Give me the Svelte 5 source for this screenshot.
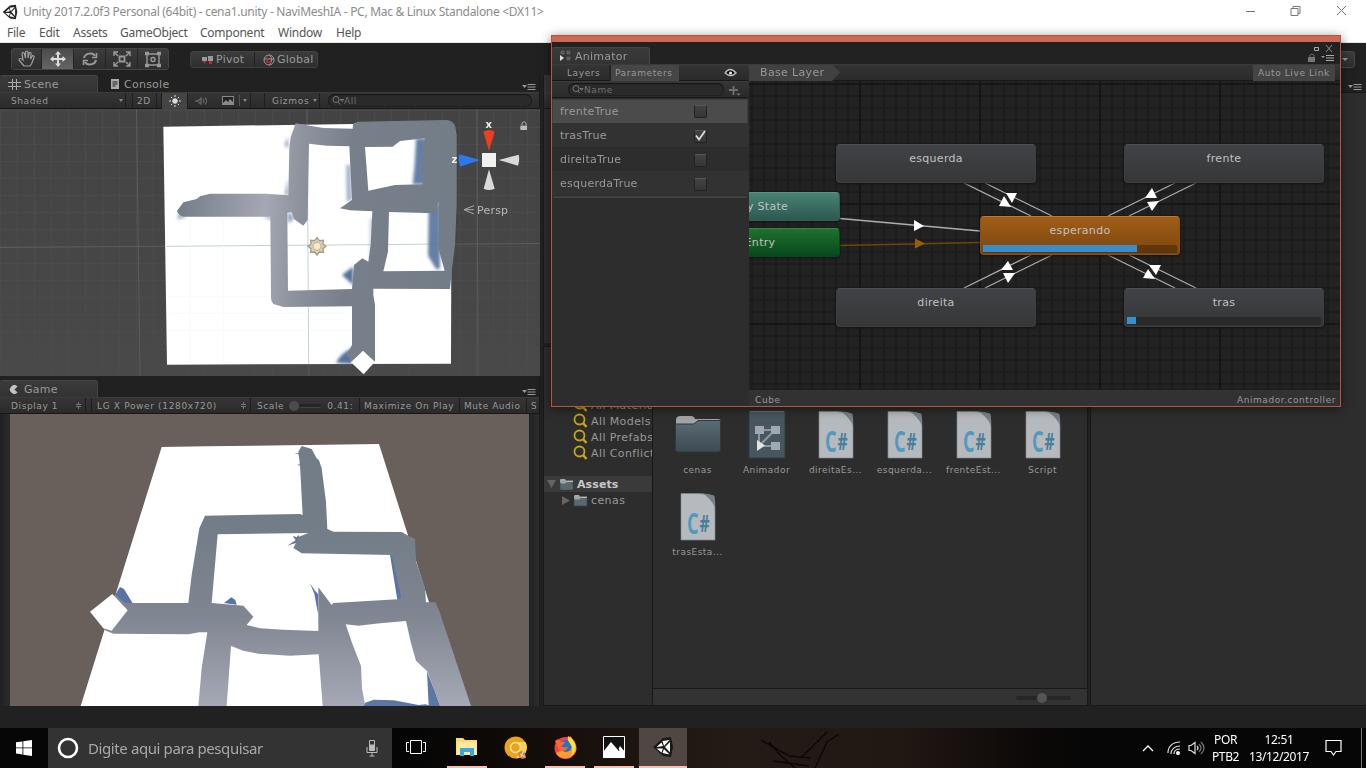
<script>
  const menus = [['File', 32], ['Edit', 34], ['Assets', 47], ['GameObject', 80], ['Component', 78], ['Window', 58], ['Help', 30]];
  const params = [['frenteTrue', false], ['trasTrue', true], ['direitaTrue', false], ['esquerdaTrue', false]];
  const nodes = [
    { name: 'Any State', kind: 'any', x: 680, y: 192 },
    { name: 'Entry', kind: 'entry', x: 680, y: 228 },
    { name: 'esquerda', kind: 'state', x: 836, y: 144 },
    { name: 'frente', kind: 'state', x: 1124, y: 144 },
    { name: 'direita', kind: 'state', x: 836, y: 288 },
    { name: 'tras', kind: 'state', x: 1124, y: 288, progress: 4.6 },
    { name: 'esperando', kind: 'def', x: 980, y: 216, progress: 79.3 }
  ];
  const edges = [
    [964, 183, 1031, 216], [985, 183, 1052, 216],
    [1175, 183, 1108, 216], [1196, 183, 1129, 216],
    [1031, 255, 964, 288], [1052, 255, 985, 288],
    [1108, 255, 1175, 288], [1129, 255, 1196, 288]
  ];
  const heads = [
    '1004,196 1011,207 999,206', '1006,193 1017,193 1012,203',
    '1152,188 1157,198 1145,198', '1147,202 1159,201 1152,211',
    '1008,261 1013,270 1001,270', '1003,273 1015,273 1008,283',
    '1148,269 1155,279 1143,278', '1149,265 1161,265 1156,275'
  ];
  const files = [['cenas', 'folder'], ['Animador', 'anim'], ['direitaEs...', 'cs'], ['esquerda...', 'cs'], ['frenteEst...', 'cs'], ['Script', 'cs'], ['trasEsta...', 'cs']];
  const range = (a, b, s) => Array.from({ length: Math.ceil((b - a) / s) }, (_, i) => a + i * s);
</script>

{#snippet paneMenu()}
  <svg class="pm" width="14" height="8"><path d="M0 2h5L2.500 5z" fill="#999" /><path d="M5.500 1.500h8M5.500 4h8M5.500 6.500h8" stroke="#999" /></svg>
{/snippet}

{#snippet smallFolder()}
  <svg width="15" height="13"><path d="M1 3V1.500L2 1h4l1 1.500h7V12H1z" fill="#9ea6a8" /><path d="M1 5h5l2-1.500h6V12H1z" fill="#5a686d" stroke="#37444a" stroke-width=".7" /><path d="M1.500 5H6l2-1.500h6" stroke="#b2babb" fill="none" /></svg>
{/snippet}

{#snippet lens()}
  <svg width="15" height="16"><circle cx="6.500" cy="6.500" r="5" fill="none" stroke="#c9a414" stroke-width="1.800" /><path d="M10 10l3.500 4" stroke="#c9a414" stroke-width="2.600" /></svg>
{/snippet}

{#snippet unityLogo(size, ink, face)}
  <svg width={size} height={size} viewBox="0 0 22 22">
    <path d="M1 11L11 2l8-1 2 10-2 10-8-1z" fill={ink} />
    <path d="M12 10L10.500 5l7-1zM4.500 11l5-4.500L11 10zM4.500 12.500H11l-1.500 4zM13 11l5-5v10.500zM12 13l5.500 5.500-7-1.500z" fill={face} />
  </svg>
{/snippet}

<div class="screen">
  <header class="title">
    {@render unityLogo(16, '#222', '#fff')}
    <span>Unity 2017.2.0f3 Personal (64bit) - cena1.unity - NaviMeshIA - PC, Mac &amp; Linux Standalone &lt;DX11&gt;</span>
    <svg width="130" height="22" fill="none" stroke="#777"><path d="M10 10.500h9M55 7.500h7v7h-7zM57 7V5.500h7v7h-2M101 5l9 9M110 5l-9 9" /></svg>
  </header>
  <nav class="menu">
    {#each menus as [m, w]}<span style:width="{w}px">{m}</span>{/each}
  </nav>

  <div class="toolbar">
    <div class="tools">
      <span><svg width="20" height="20" fill="none" stroke="#a0a0a0" stroke-width="1.200"><path d="M7 17l-5-6c0-2 2-2 4 0L5 5c0-2 2-2 2.500 0L8.500 9V3.500c0-2 2.500-2 2.500 0V9l1-4.500c.5-2 2.500-1 2 1L13.500 10l1.500-2.500c1-1.500 2.500-.5 2 1L14.500 15 13 17z" /></svg></span>
      <span class="on"><svg width="16" height="16" fill="#ddd"><path d="M7 3.500H5L8 0l3 3.500H9V7h3.500V5L16 8l-3.500 3V9H9v3.500h2L8 16l-3-3.500h2V9H3.500v2L0 8l3.500-3v2H7z" /></svg></span>
      <span><svg width="16" height="14" fill="none" stroke="#999" stroke-width="2"><path d="M2 6c1-5 9-6 11-2M14 8c-1 5-9 6-11 2" /><path d="M10 5.500h4.500V1M6 8.500H1.500V13" stroke-width="1.600" /></svg></span>
      <span><svg width="18" height="16" fill="none" stroke="#999" stroke-width="1.400"><path d="M6.500 5.500h5v5h-5z" stroke-width="1.800" /><path d="M1 5V1h4M1 1l4 4M17 5V1h-4M17 1l-4 4M1 11v4h4M1 15l4-4M17 11v4h-4M17 15l-4-4" /></svg></span>
      <span><svg width="18" height="17" fill="none" stroke="#999" stroke-width="1.400"><path d="M3 3h12v11H3z" /><circle cx="9" cy="8.500" r="2" /><path d="M1 2.500h4M13 2.500h4M1 14.500h4M13 14.500h4" stroke-width="3.500" /></svg></span>
    </div>
    <div class="pivot t11">
      <span><svg width="12" height="10"><path d="M0 2h5v4H0zM6 1h5v5H6z" fill="#999" /><path d="M1 6h3l-1.500 3zM7 6h3v3H7z" fill="#d02038" /></svg>Pivot</span>
      <span><svg width="12" height="12" fill="none" stroke="#999"><circle cx="6" cy="6" r="5" /><path d="M1 5h10M6 1c4 3 3 7 0 10" /><path d="M4 3v5h4" stroke="#d02038" stroke-width="1.500" /></svg>Global</span>
    </div>
    <div class="layout"><svg width="6" height="4"><path d="M0 0h6L3 3z" fill="#999" /></svg></div>
  </div>

  <main>
    <section class="left">
      <div class="tabs">
        <div class="tab t11 first"><svg width="13" height="13" stroke="#aaa"><path d="M4.500 1v11M8.500 1v11M0 4.500h13M0 8.500h13" /></svg>Scene</div>
        <div class="tab t11 idle"><svg width="9" height="11"><path d="M0 0h8v10H0z" fill="#aaa" /><path d="M1.500 3h5M1.500 5h5M1.500 7h3" stroke="#222" /></svg>Console</div>
        {@render paneMenu()}
      </div>
      <div class="bar t9">
        <span class="c shaded">Shaded<i class="dn"></i></span><span class="c gap1"></span><span class="c d2">2D</span><span class="c gap2"></span>
        <span class="c ic on"><svg width="12" height="12" stroke="#ddd"><circle cx="6" cy="6" r="2.300" fill="#ddd" /><path d="M6 0v2M6 10v2M0 6h2M10 6h2M2 2l1.200 1.200M8.800 8.800L10 10M10 2L8.800 3.200M3.200 8.800L2 10" stroke-width="1" /></svg></span>
        <span class="ic"><svg width="13" height="12" fill="none" stroke="#656565"><path d="M0 6h3l3-3v6L3 7M8 4c1 1 1 3 0 4M10 2.500c2 2 2 5 0 7" stroke-width="1.300" /></svg></span>
        <span class="c pic"><svg width="12" height="9"><path d="M0 0h12v9H0z" fill="#888" /><path d="M1 1h10v5L8 3 6 6 4 4 1 7z" fill="#222" /></svg><b></b><i class="dn"></i></span>
        <span class="c gap3"></span><span class="c giz">Gizmos<i class="dn"></i></span>
        <span class="search"><svg width="13" height="9" fill="none" stroke="#777"><circle cx="4" cy="3.500" r="3" /><path d="M6 6l2.500 2.500M8 3.500h4l-2 2z" /></svg>All</span>
      </div>
      <svg class="scene" width="540" height="267" viewBox="0 109 540 267">
        <defs>
          <linearGradient id="slate" gradientUnits="userSpaceOnUse" x1="80" y1="0" x2="920" y2="60"><stop offset="0" stop-color="#707984" /><stop offset=".34" stop-color="#a4a8b3" /><stop offset=".45" stop-color="#8f949f" /><stop offset=".64" stop-color="#777f8b" /><stop offset="1" stop-color="#737d87" /></linearGradient>
          <filter id="soft" x="-40%" y="-40%" width="180%" height="180%"><feGaussianBlur stdDeviation="5" /></filter>
          <linearGradient id="sbg" x2="0" y2="1"><stop stop-color="#434343" /><stop offset="1" stop-color="#494949" /></linearGradient>
        </defs>
        <rect y="109" width="540" height="267" fill="url(#sbg)" />
        {#each range(0, 540, 17) as x}<path d="M{x + .5} 109V376" stroke="#4d4d4d" stroke-opacity=".7" />{/each}
        {#each range(110, 376, 17) as y}<path d="M0 {y + .5}H540" stroke="#4d4d4d" stroke-opacity=".7" />{/each}
        <path d="M136.500 109L140 376M307 109L309 376M477 109L478 376M0 247.500L540 243.500" stroke="#5c5c5c" fill="none" />
        <g transform="translate(150 105) scale(.33333)">
          <path d="M40 65L610 57 905 60 903 776 51 779z" fill="#fff" />
          <path d="M50 424L900 417M472 120L476 777" stroke="#c0d1d9" stroke-width="3" />
          <path d="M60 575H360M60 625H600M60 675H600M120 345V775M220 345V775" stroke="#f1f8f9" stroke-width="2" />
          <g fill="#54719c" filter="url(#soft)">
            <path d="M798 100h32v138h-42l6-60z" opacity=".9" /><path d="M836 322l34-35v205h-12l-24-40z" opacity=".9" /><path d="M414 95v35l-10-10zM414 220v50h-10z" opacity=".7" /><path d="M588 180l14 0 4 105-16 5z" opacity=".5" /><path d="M658 340h15v105l-15 20z" opacity=".25" />
            <path d="M576 510l33-25v55z" /><path d="M558 774q15-30 49-45v48z" /><path d="M335 335h30v10zM412 325h14l6 18-18 12zM85 325l25 12-28 5z" opacity=".6" />
          </g>
          <path fill="url(#slate)" fill-rule="evenodd" d="M81 318L100 292 140 282 150 274 180 266 345 266 415 271 418 130 422 97 437 55 480 62 520 69 608 71 610 55 625 50 890 45 Q912 48 916 65L920 90 920 300 915 420 905 500 900 552 670 551 670 570 675 600 675 770 640 740 605 770 590 750 606 720 606 604 400 606 370 597 Q362 590 363 575L361 335 100 335 Q84 330 81 318ZM477 116L530 122 598 124 606 285 570 310 600 316 667 319 662 420 655 470 637 460 612 480 606 552 414 557 412 323 425 322 432 342 460 362 473 345ZM645 126L728 125 750 108 824 100 815 170 818 238 735 240 655 257ZM717 321L853 325 866 290 865 430 884 497 700 499 714 440Z" />
          <path d="M639 737L674 771 641 808 603 772z" fill="#fff" />
          <g stroke="#a39c8b" stroke-width="4" fill="#d8d0bb"><path d="M501 398l7 9 12-1-1 11 9 7-9 7 1 11-12-1-7 9-7-9-12 1 1-11-9-7 9-7-1-11 12 1z" /><circle cx="501" cy="424" r="12" fill="#fbe9c4" stroke-width="2" /></g>
          <path d="M1000 80q17-10 34 0l-17 58z" fill="#ed3e20" /><path d="M928 148q-5 17 2 37l60-20z" fill="#2d78ea" /><path d="M1106 149q4 16-2 33l-58-17z" fill="#d9d9d9" /><path d="M1001 251q16 8 33 0l-17-58z" fill="#d9d9d9" />
          <path d="M996 144h42v42h-42z" fill="#f0f0f0" />
          <path d="M972 302l-30 12 30 13M942 314h30" fill="none" stroke="#aaa" stroke-width="3" />
          <path d="M1111 62h20v13h-20z" fill="#bbb" /><path d="M1116 62v-8q7-8 12 0v8" stroke="#aaa" stroke-width="3" fill="none" />
        </g>
        <text x="485.500" y="127.500" class="ax">x</text><text x="451.500" y="163" class="ax">z</text><text x="477" y="214" class="persp">Persp</text>
      </svg>

      <div class="tabs gametabs">
        <div class="tab t11 first"><svg width="13" height="11"><path d="M9 2.500A4 4 0 1 0 9 8.500L6 5.500z" fill="#c4c4c4" stroke="#c4c4c4" /></svg>Game</div>
        {@render paneMenu()}
      </div>
      <div class="bar t9">
        <span class="c disp">Display 1<em></em></span><span class="c gap1"></span><span class="c res">LG X Power (1280x720)<em></em></span>
        <span class="c scale">Scale<u></u><s></s>0.41:</span><span class="c max">Maximize On Play</span><span class="c mute">Mute Audio</span><span class="st">S</span>
      </div>
      <div class="gamewrap">
        <svg width="519" height="292" viewBox="10 414 519 292">
          <defs><linearGradient id="gs" gradientUnits="userSpaceOnUse" x1="0" y1="213" x2="0" y2="993"><stop offset=".3" stop-color="#727d88" /><stop offset=".65" stop-color="#7f8591" /><stop offset="1" stop-color="#a5a9b5" /></linearGradient></defs>
          <rect x="10" y="414" width="519" height="292" fill="#69605b" />
          <g transform="translate(0 375) scale(.33333)">
            <path d="M485 216L620 214 1137 207 1223 478 1287 682 1390 993H242z" fill="#fff" />
            <g fill="#5874a2"><path d="M345 660l15-24 12 6 27 44h-25zM672 684l22-17 12 8 4 14zM862 512l25-16-9-14 12 5 6-7 3 11 28-11-12 14-30 11z" /><path d="M883 235l18-2v8zM891 270l10-5v8z" opacity=".6" /><path d="M1170 539h14l22 135h-14zM930 625l15 22 9 10 1 64-12-65z" /></g>
            <path fill="url(#gs)" fill-rule="evenodd" d="M905 213L935 222 950 250 957 256 965 280 978 380 982 462 1000 470 1205 471 1225 482 1245 492 1248 560 1262 600 1275 640 1278 682 1307 682 1320 715 1413 993 1320 993 1305 950 1283 890 1248 857 1233 805 1218 738 1140 745 1075 752 1037 748 1057 806 1083 873 1086 940 1096 993 968 993 956 838 870 842 775 836 730 827 693 813 680 993 595 993 605 880 622 772 598 772 565 778 340 776 313 765 345 660 375 684 565 684 575 600 598 460 615 422 900 417 908 420 900 270 895 230ZM653 478L925 474 897 485 880 519 905 535 1175 540 1205 672 1000 684 995 690 955 637 955 768 850 764 780 760 740 750 760 725 730 692 635 684Z" />
            <path d="M1281 888l24 62 15 43h-34zM1096 983l25-9 60 2 75 14 20-2 25 7h-210z" fill="#5d77a3" />
            <path d="M337 657L383 706 335 767 310 760 270 710z" fill="#fff" />
          </g>
        </svg>
      </div>
    </section>

    <section class="mid">
      <div class="hier"><div class="tabs"></div><div class="bar"></div></div>
      <div class="project">
        <div class="tree t11">
          <div class="row q">{@render lens()}All Materials</div>
          <div class="row q">{@render lens()}All Models</div>
          <div class="row q">{@render lens()}All Prefabs</div>
          <div class="row q">{@render lens()}All Conflicts</div>
          <div class="row"></div>
          <div class="row assets"><svg width="9" height="8"><path d="M0 0h9L4.500 8z" fill="#646464" /></svg>{@render smallFolder()}<b>Assets</b></div>
          <div class="row sub"><svg width="8" height="9"><path d="M0 0v9l8-4.500z" fill="#646464" /></svg>{@render smallFolder()}cenas</div>
        </div>
        <div class="list">
          <div class="files t9">
            {#each files as [name, kind]}
              <figure>
                <svg width="52" height="54" viewBox="0 -1 52 54">
                  {#if kind === 'folder'}
                    <defs><linearGradient id="fo" x2="0" y2="1"><stop stop-color="#5b6c75" /><stop offset="1" stop-color="#3c4a51" /></linearGradient></defs>
                    <path d="M4 14V7q1-3 4-3h11q3 0 4 3h23q3 0 3 3v6H4z" fill="#a2a5a6" /><path d="M3.500 12H22l4-3.500h22.500V38q0 2-3 2H6q-2.500 0-2.500-2z" fill="url(#fo)" stroke="#2f3a3f" />
                  {:else if kind === 'anim'}
                    <path d="M8 -1h36v47H8z" fill="#47565f" stroke="#303b41" /><path d="M9 -.5h34" stroke="#60727c" /><path d="M18 18h15M18 18v14M34 18L19 33M34 34H20" stroke="#8d989e" stroke-width="2" />
                    <path d="M14 14h9v8h-9zM30 14h9v8h-9zM30 30h9v8h-9z" fill="#a0a9af" /><path d="M16 28l8 5.500L16 39z" fill="#e4e4e4" />
                  {:else}
                    <path d="M9 -.5H26Q36 0 42 2q1 6 1 14V46H9z" fill="#b6babf" stroke="#80868b" stroke-width=".7" /><path d="M31 -.3Q39 0 42 2q1 8 1 11Q38 4 31 -.3z" fill="#75828a" />
                    <text x="15" y="40" class="csharp" textLength="12" lengthAdjust="spacingAndGlyphs">C</text>
                    <text x="27.500" y="37.500" class="csharp hash" textLength="10.500" lengthAdjust="spacingAndGlyphs">#</text>
                  {/if}
                </svg>
                <figcaption>{name}</figcaption>
              </figure>
            {/each}
          </div>
          <div class="foot"><u></u></div>
        </div>
      </div>
    </section>

    <section class="insp"><div class="tabs">{@render paneMenu()}</div><div class="body"></div></section>
  </main>
  <div class="status"></div>

  <footer>
    <div class="start"><svg width="16" height="16" fill="#fff"><path d="M0 2.300L6.500 1.400V7.500H0zM7.300 1.300L16 0v7.500H7.300zM0 8.300h6.500v6.200L0 13.600zM7.300 8.300H16V16l-8.700-1.200z" /></svg></div>
    <div class="find"><svg width="22" height="22"><circle cx="11" cy="11" r="9" fill="none" stroke="#fff" stroke-width="2.600" /></svg><span>Digite aqui para pesquisar</span><svg width="12" height="17" fill="none" stroke="#bbb"><path d="M3.500.5h5v10h-5z" /><path d="M4 5h4v5H4z" fill="#bbb" /><path d="M1 7v5.500h10V7M6 12.500V16M3.500 16h5" /></svg></div>
    <div class="app"><svg width="20" height="14" fill="none" stroke="#fff"><path d="M4.500.5h11v13h-11zM3 2.500H.5v9H3M17 2.500h2.500v9H17" /></svg></div>
    <div class="app run a2"><svg width="22" height="20"><path d="M0 1h7l2 2h12v15H0z" fill="#fcd976" /><path d="M1 5h20v13H1z" fill="#ffe79b" /><path d="M4 11h14v8h-4v-4H8v4H4z" fill="#36a8e0" /></svg></div>
    <div class="app a3"><svg width="23" height="23"><circle cx="11.500" cy="11.500" r="11" fill="#eda31a" /><path d="M11.500 6h10A11 11 0 0 1 12 22.500l5-8z" fill="#fbd04f" /><circle cx="11.500" cy="11.500" r="5" fill="#e9a51d" stroke="#fbe6ae" stroke-width="1.500" /><path d="M14 17l3-2 4 2 1 5-4 1-3-2z" fill="#c78644" /><path d="M16 18l5 3M19 16l-2 5" stroke="#fae3c0" /></svg></div>
    <div class="app run a4"><svg width="23" height="23"><circle cx="11.500" cy="12" r="11" fill="#f43f4c" /><path d="M2 17C5 24 18 25 22 15c1-6-1-10-6-15-2 4-2 6 0 10z" fill="#ff9a2c" /><circle cx="12" cy="10" r="6" fill="#2574c9" /><path d="M14 0c8 5 11 15 2 20 3-3 3-7 1-11-2-3-4-5-3-9z" fill="#ffe23b" /><path d="M1 5l3-2 3 3h4c-1 3-3 3-4 4 2 2 5 1 7 1-2 5-8 5-10 1z" fill="#fb6930" /></svg></div>
    <div class="app run a5"><svg width="22" height="22"><path d="M.5.5h21v21H.5z" fill="#111" stroke="#fff" /><path d="M0 16L8 6l7 8 2-4 5 6v6H0z" fill="#fff" /><path d="M14 10l2 5" stroke="#111" /></svg></div>
    <div class="app run active">{@render unityLogo(22, '#181818', '#fff')}</div>
    <svg class="branches" width="150" height="40" fill="none" stroke="#0d0807" stroke-width="1.500"><path d="M0 12l28 16 22 2M12 33l36 5M8 14l12 14 14 12M40 30L66 4M54 40l12-26 12-8" /></svg>
    <div class="tray">
      <svg class="chev" width="12" height="8" fill="none" stroke="#fff" stroke-width="1.300"><path d="M1 7l5-5 5 5" /></svg>
      <svg width="14" height="14" fill="none" stroke="#ddd" stroke-width="1.200"><path d="M1 12C1 5 6 1 13 1M4 13c0-5 4-8 9-8M7 13c0-3 2-5 6-5" /><circle cx="11" cy="12" r="1.500" fill="#fff" /></svg>
      <svg width="17" height="14" fill="none" stroke="#ddd" stroke-width="1.200"><path d="M1 4.500h2l4-3v11l-4-3H1zM9 5q2 2 0 4" /><path d="M11 3q4 4 0 8M13 1q6 6 0 12" stroke="#777" /></svg>
      <div class="por">POR<br />PTB2</div><div class="clock">12:51<br />13/12/2017</div>
      <svg class="note" width="17" height="18" fill="none" stroke="#fff" stroke-width="1.200"><path d="M1 1.500h15v11h-5L8.500 16 6 12.500H1z" /></svg><i></i>
    </div>
  </footer>

  <div class="animator">
    <div class="strip"></div>
    <div class="wtabs">
      <div class="tab t11"><svg width="12" height="12"><path d="M1 1h3v3H1zM7 1h3v3H7zM7 7h3v3H7z" fill="#555" stroke="#777" stroke-width=".5" /><path d="M0 5l4 3-4 3z" fill="#ddd" /></svg>Animator</div>
      <svg class="lk" width="8" height="10"><path d="M0 4h7v5H0z" fill="#777" /><path d="M2 4V2q2-2 4 0v2" fill="none" stroke="#666" /></svg>
      <svg class="wc" width="28" height="22" fill="none" stroke="#888"><path d="M2.500 5.500h4v3h-4z" stroke="#aaa" /><path d="M14 3l6 7M20 3l-6 7" /><path d="M9 14h4l-2 2z" fill="#999" stroke="none" /><path d="M14 13.500h8M14 16h8M14 18.500h8" stroke="#aaa" /></svg>
    </div>
    <div class="wbody">
      <div class="side">
        <div class="bar t9"><span class="lay">Layers</span><span class="par">Parameters</span><svg width="13" height="10"><path d="M1 5q5-7 11 0-5 5-11 0" fill="#111" stroke="#bbb" stroke-width="1.500" /><circle cx="6.500" cy="5" r="1.500" fill="#eee" /></svg></div>
        <div class="bar t9"><span class="search"><svg width="12" height="9" fill="none" stroke="#777"><circle cx="4" cy="3.500" r="3" /><path d="M6 6l2 2M8 3.500h3l-1.500 2z" /></svg>Name</span><svg width="12" height="12"><path d="M0 6h9M4.500 2v9" stroke="#707070" stroke-width="1.800" /><path d="M7 9.500h5l-2.500 2z" fill="#777" /></svg></div>
        {#each params as [p, on], i}
          <div class="param t11" class:sel={i === 0} class:alt={i === 2}><span>{p}</span><div class="box">{#if on}<svg width="13" height="12"><path d="M2 5.500l3 4L11 1" fill="none" stroke="#ddd" stroke-width="1.800" /></svg>{/if}</div></div>
        {/each}
        <div class="endline"></div>
      </div>
      <div class="graph">
        <div class="bar crumb"><span class="t11">Base Layer</span><svg width="9" height="17"><path d="M0 0l8 8.500L0 17z" fill="#414141" /></svg><b class="t9">Auto Live Link</b></div>
        <div class="canvas">
          <svg width="591" height="308" viewBox="749 81 591 308">
            <rect x="749" y="81" width="591" height="308" fill="#222" />
            {#each range(752, 1340, 12) as x}<path d="M{x} 81V389" stroke="#1b1b1b" stroke-width="1.500" />{/each}
            {#each range(84, 389, 12) as y}<path d="M749 {y}H1340" stroke="#1b1b1b" stroke-width="1.500" />{/each}
            <path d="M860 81V389M980 81V389M1100 81V389M1220 81V389M749 84H1340M749 204H1340M749 324H1340" stroke="#141414" stroke-width="1.600" />
            <g stroke="#adadad" stroke-width="1.300">
              <path d="M840 218.500L980 231" />
              {#each edges as [a, b, c, d]}<path d="M{a} {b}L{c} {d}" />{/each}
            </g>
            <path d="M840 245.500L980 242.500" stroke="#6d4805" stroke-width="1.400" />
            <path d="M914 220l10 6-10 5z" fill="#fff" /><path d="M915 238.500l10 5-10 5z" fill="#986004" />
            {#each heads as h}<polygon points={h} fill="#fff" />{/each}
          </svg>
          {#each nodes as n}
            <div class="node {n.kind} t11" style:left="{n.x - 749}px" style:top="{n.y - 81}px">{n.name}
              {#if n.progress}<div class="track"><div style:width="{n.progress}%"></div></div>{/if}
            </div>
          {/each}
        </div>
        <div class="cfoot t9"><span>Cube</span><span class="ctrl">Animador.controller</span></div>
      </div>
    </div>
  </div>
</div>

<style>
  :global(body) { margin: 0; overflow: hidden; background: #222; }
  * { box-sizing: border-box; }
  .screen { position: relative; width: 1366px; height: 768px; display: flex; flex-direction: column; overflow: hidden; background: #212121; font-family: "DejaVu Sans", sans-serif; color: #989898; white-space: nowrap; }
  svg { flex: none; display: block; }
  .t11 { font-size: 11px; letter-spacing: .25px; }
  .t9 { font-size: 9px; letter-spacing: .6px; }
  .title { height: 23px; background: #fff; display: flex; align-items: center; padding-left: 2px; gap: 5px; font: 12px "Noto Sans", sans-serif; color: #8b8b8b; }
  .title span { letter-spacing: -.295px; flex: 1; }
  .menu { height: 20px; background: #fff; border-bottom: 1px solid #e6e6e6; display: flex; padding-left: 7px; font: 12px/19px "Noto Sans", sans-serif; letter-spacing: -.25px; color: #555; }
  .toolbar { height: 32px; display: flex; padding-left: 11px; }
  .tools { display: flex; width: 158px; height: 22px; margin-top: 5px; border: 1px solid #444; border-radius: 3px; background: linear-gradient(#3c3c3c, #2e2e2e); }
  .tools span { flex: none; width: 32px; display: flex; align-items: center; justify-content: center; border-right: 1px solid #252525; }
  .tools span:first-child { width: 30px; }
  .tools span:last-child { width: 30px; border: 0; }
  .tools .on { background: linear-gradient(#4b4b4b, #656565); }
  .pivot { display: flex; height: 17px; margin: 8px 0 0 21px; width: 128px; border: 1px solid #414141; border-radius: 3px; background: linear-gradient(#3c3c3c, #2e2e2e); }
  .pivot span { flex: 1; display: flex; align-items: center; gap: 2px; border-left: 1px solid #222; padding-left: 8px; }
  .pivot span:first-child { padding-left: 11px; border: 0; flex: none; width: 63px; }
  .layout { margin: 8px 11px 0 auto; height: 17px; width: 60px; border: 1px solid #494949; border-radius: 3px; background: linear-gradient(#3c3c3c, #2e2e2e); display: flex; justify-content: flex-end; align-items: center; padding-right: 6px; }
  main { height: 631px; display: flex; }
  .left { width: 540px; border-right: 1px solid #191919; }
  .tabs { height: 17px; display: flex; align-items: flex-end; }
  .tabs .pm { margin: 0 3px 1px auto; }
  .tab { height: 17px; display: flex; align-items: center; gap: 3px; padding-left: 8px; width: 98px; background: linear-gradient(#3a3a3a, #333); border-top: 1px solid #464646; border-right: 1px solid #454545; border-radius: 2px 3px 0 0; }
  .tab.first svg { width: 13px; }
  .tab.idle { background: none; border-color: transparent; padding-left: 13px; gap: 4px; }
  .bar { height: 17px; display: flex; align-items: center; background: linear-gradient(#353535, #2a2a2a); border-top: 1px solid #3b3b3b; border-bottom: 1px solid #181818; }
  .bar span { height: 16px; display: flex; align-items: center; }
  .bar .c { border-right: 1px solid #1e1e1e; }
  .bar i.dn { border: 2.5px solid transparent; border-top: 3px solid #888; border-bottom: 0; margin-left: auto; margin-right: 2px; }
  .shaded { width: 126px; padding-left: 11px; }
  .gap1 { width: 7px; }
  .d2 { width: 24px; padding-left: 4px; }
  .gap2 { width: 5px; }
  .ic { width: 26px; justify-content: center; }
  .ic.on { background: #444; }
  .pic { width: 37px; padding-left: 8px; }
  .pic b { width: 1px; height: 11px; background: #555; margin-left: 5px; }
  .pic i.dn { margin-right: 3px; }
  .gap3 { width: 14px; }
  .giz { width: 55px; padding-left: 7px; letter-spacing: .7px; }
  .search { border-radius: 7px; background: #2a2a2a; box-shadow: inset 0 1px 1px #171717, inset 0 0 0 1px #202020; color: #707070; padding-left: 4px; }
  .bar .search { height: 13px; }
  .left .search { width: 204px; margin-left: 8px; }
  .left .search svg { width: 12px; }
  .ax { font: bold 10px "DejaVu Sans", sans-serif; fill: #eee; }
  .persp { font: 11px "DejaVu Sans", sans-serif; letter-spacing: .2px; fill: #b8b8b8; }
  .gametabs { margin-top: 4px; }
  .disp { width: 86px; padding-left: 11px; }
  .disp + .gap1 { width: 6px; }
  .res { width: 159px; padding-left: 5px; letter-spacing: .65px; }
  .bar em { margin-left: auto; margin-right: 4px; width: 5px; height: 7px; background: linear-gradient(#777, #777) 0 2px/5px 1px no-repeat, linear-gradient(#777, #777) 0 4px/5px 1px no-repeat, linear-gradient(#777, #777) 2px 0/1px 2px no-repeat, linear-gradient(#777, #777) 2px 5px/1px 2px no-repeat; }
  .scale { width: 109px; padding-left: 6px; }
  .scale u { width: 10px; height: 10px; border-radius: 50%; background: #4b4b4b; margin-left: 5px; }
  .scale s { width: 22px; height: 4px; border-radius: 2px; background: #252525; border-bottom: 1px solid #444; margin-right: 6px; }
  .max { width: 100px; padding-left: 4px; letter-spacing: .65px; }
  .mute { width: 67px; padding-left: 4px; letter-spacing: .55px; }
  .st { padding-left: 4px; width: 10px; overflow: hidden; }
  .gamewrap { padding: 0 10px; background: linear-gradient(90deg, #202020, #2c2c2c 10px, #222 529px, #2c2c2c); height: 292px; }
  .mid { width: 545px; margin-left: 3px; display: flex; flex-direction: column; gap: 3px; }
  .hier { height: 268px; background: #2d2d2d; border-left: 1px solid #191919; }
  .hier .tabs { background: #343434; }
  .project { flex: 1; display: flex; border: 1px solid #191919; background: #2d2d2d; }
  .tree { width: 109px; border-right: 1px solid #171717; padding-top: 50px; overflow: hidden; letter-spacing: .4px; }
  .row { height: 16px; display: flex; align-items: center; gap: 3px; }
  .row.q { padding-left: 29px; gap: 3px; }
  .assets { background: #3a3a3a; padding-left: 3px; gap: 3px; margin-top: -1px; }
  .assets b { color: #c8c8c8; letter-spacing: .1px; }
  .sub { padding-left: 18px; gap: 3px; }
  .list { flex: 1; display: flex; flex-direction: column; }
  .files { display: grid; grid-template-columns: repeat(6, 69px); grid-auto-rows: 82px; padding: 64px 0 0 10px; flex: 1; align-content: start; }
  figure { margin: 0; display: flex; flex-direction: column; align-items: center; }
  figcaption { line-height: 11px; letter-spacing: .45px; }
  .csharp { font: bold 29px "Open Sans", sans-serif; fill: #5299bd; }
  .csharp.hash { font-size: 24px; fill: #467f9c; }
  .foot { height: 17px; border-top: 1px solid #191919; background: #333; display: flex; align-items: center; justify-content: flex-end; padding-right: 16px; }
  .foot u { width: 55px; height: 4px; background: #272727; border-radius: 2px; display: flex; align-items: center; margin-top: 2px; }
  .foot u::before { content: ""; width: 10px; height: 10px; border-radius: 5px; background: #555; margin-left: 21px; }
  .insp { flex: 1; margin-left: 2px; display: flex; flex-direction: column; }
  .insp .body { flex: 1; background: #2d2d2d; border: 1px solid #191919; border-right: 0; }
  .insp .pm { margin-right: 4px; margin-bottom: 1px; }
  .status { height: 22px; }
  footer { height: 40px; display: flex; background: linear-gradient(90deg, #050505 30%, #0e0907 36%, #1c130f 45%, #241a16 54%, #211713 66%, #0b0807 76%, #060606 80%); }
  .start { width: 48px; display: grid; place-items: center; background: #060606; }
  .find { width: 344px; background: #333; display: flex; align-items: center; padding: 0 14px 0 9px; gap: 9px; font: 15px "Noto Sans", sans-serif; color: #a8a8a8; }
  .find span { flex: 1; letter-spacing: -.4px; }
  .app { width: 48px; display: grid; place-items: center; border-bottom: 2px solid transparent; }
  .run { border-bottom-color: #ffbcaa; width: 40px; }
  .a2 { margin-left: 7px; }
  .a3 { width: 46px; margin-left: 5px; }
  .a4 { margin-left: 7px; }
  .a5 { margin-left: 9px; }
  .active { width: 48px; margin-left: 5px; background: #504743; }
  .branches { margin-left: 74px; }
  .tray { margin-left: auto; display: flex; align-items: center; color: #fff; font: 12px/17px "Noto Sans", sans-serif; letter-spacing: -.38px; text-align: center; }
  .tray svg + svg { margin-left: 13px; }
  .tray svg:nth-of-type(3) { margin-left: 7px; }
  .por { width: 29px; margin-left: 6px; }
  .clock { width: 60px; margin-left: 9px; }
  .note { margin-left: 16px; }
  .tray > i { width: 1px; height: 40px; background: #777; margin: 0 4px 0 19px; }
  .animator { position: absolute; left: 551px; top: 35px; width: 790px; height: 372px; border: 1px solid #c15038; background: #222; box-shadow: 0 2px 10px rgba(0,0,0,.5); display: flex; flex-direction: column; }
  .strip { height: 6px; background: #c96b54; }
  .wtabs { height: 22px; display: flex; align-items: flex-end; }
  .wtabs .tab { gap: 3px; }
  .wtabs .lk { margin-left: auto; margin-bottom: 1px; }
  .wtabs .wc { margin-left: -4px; margin-right: 0; }
  .wbody { flex: 1; display: flex; min-height: 0; }
  .side { width: 197px; background: #2d2d2d; }
  .lay { padding-left: 15px; width: 59px; border-right: 2px solid #222; }
  .par { width: 68px; padding-left: 4px; background: #464646; }
  .side .bar svg { margin-left: 45px; }
  .side .search { width: 156px; margin-left: 16px; }
  .side .bar .search svg { margin-left: 0; }
  .side .bar .search + svg { margin-left: 5px; }
  .param { height: 24px; display: flex; align-items: center; padding-left: 8px; background: #323232; }
  .param span { width: 134px; }
  .param.alt { background: #2d2d2d; }
  .param.sel { background: #4b4b4b; border: 1px solid #3d3d3d; margin: 1px 1px -1px 0; height: 25px; padding-left: 7px; }
  .param.sel span { margin-top: -1px; }
  .box { width: 13px; height: 13px; margin-top: 2px; background: linear-gradient(#424242, #353535); border: 1px solid #222; border-top-color: #585858; border-radius: 2px; }
  .sel .box { margin-top: 0; }
  .box svg { margin: -1px 0 0 -1px; }
  .endline { height: 2px; background: #404040; margin: 1px 2px 0 1px; }
  .graph { flex: 1; display: flex; flex-direction: column; }
  .crumb span { background: #414141; padding-left: 11px; width: 83px; letter-spacing: .35px; }
  .crumb b { font-weight: normal; margin: 0 5px 0 auto; background: #444; height: 16px; line-height: 16px; width: 82px; padding-left: 5px; }
  .canvas { height: 308px; position: relative; overflow: hidden; }
  .node { position: absolute; width: 200px; height: 39px; border-radius: 4px; text-align: center; line-height: 27px; color: #c0c0c0; background: linear-gradient(#404246, #363738); border: 1px solid #3b3d3f; border-top-color: #4e5052; box-shadow: 0 1px 3px #111; letter-spacing: .3px; }
  .any, .entry { width: 160px; height: 29px; background: linear-gradient(#488273, #2c5950); border-color: #305f55; border-top-color: #559585; }
  .entry { background: linear-gradient(#21702f, #07491c); border-color: #07491c; border-top-color: #378444; }
  .def { background: linear-gradient(#a15e18, #7c450d); border-color: #8d5115; border-top-color: #bd7835; }
  .track { position: absolute; left: 2px; right: 2px; bottom: 1px; height: 8px; background: rgba(0,0,0,.25); border-radius: 1px; }
  .track div { height: 7px; background: #388ecb; }
  .cfoot { height: 17px; background: #323232; border-top: 1px solid #1c1c1c; display: flex; justify-content: space-between; padding: 0 4px 0 6px; line-height: 20px; }
  .ctrl { letter-spacing: .55px; }
</style>
